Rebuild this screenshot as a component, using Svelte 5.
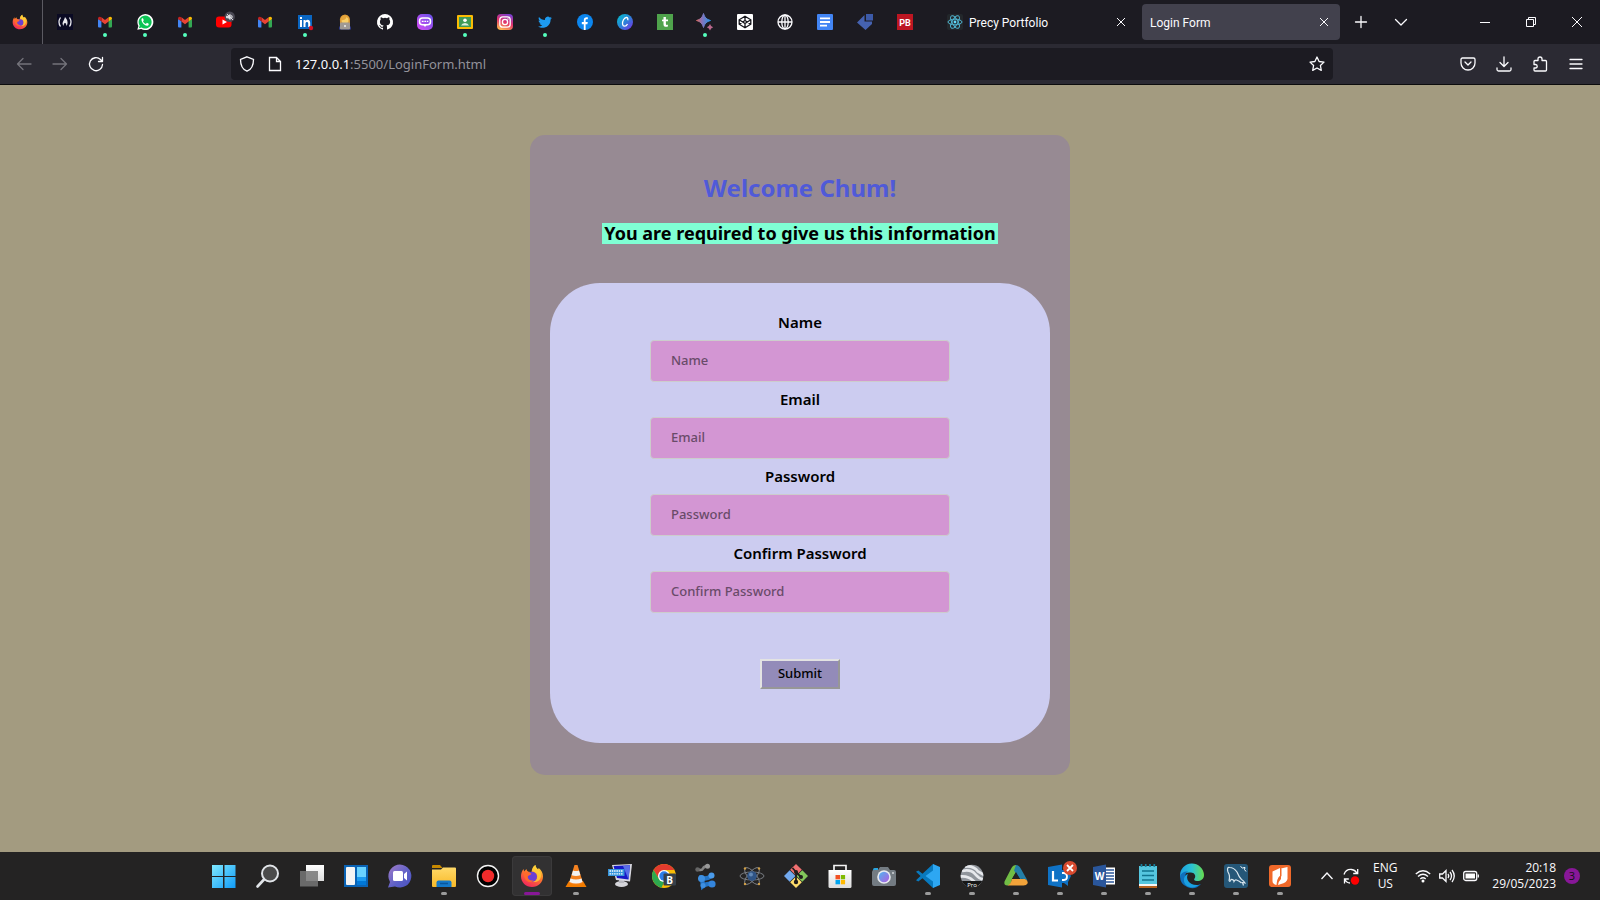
<script>
  const gmail =
    '<path d="M1 5v7.500q0 1 1 1h2.400V7z" fill="#4285f4"/><path d="M15 5v7.500q0 1-1 1h-2.400V7z" fill="#34a853"/><path d="M4.400 3.300 8 6l3.600-2.700V7.500L8 10.200 4.400 7.500z" fill="#ea4335"/><path d="M1 4.500q0-1.700 1.700-1.700 1 0 1.700.6v4.100L1 5z" fill="#c5221f"/><path d="M15 4.500q0-1.700-1.700-1.700-1 0-1.700.6v4.100L15 5z" fill="#fbbc04"/>';
  const firefox =
    '<path d="M12 23C5.800 23 1 18.400 1 12.300 1 9.500 2 6.800 3.600 5l.5 2.500L6.500 5c.2 1.400.8 2.300 2 2.700l3 .3C12 4.500 13.200 2.200 15.500 1c.1 2.200 1 3.300 2.500 4.500l.7-1.500c2.700 2 4.300 5 4.300 8.500C23 18.500 18.100 23 12 23z" fill="url(#fox)"/><path d="M15.500 1c-2.600 1.400-3.500 3.700-3.300 6.300 2.300.3 5 2 5 5.200 0 3-2 5-4.700 5.300 4.500 1.200 8.500-1.600 8.500-6.300 0-2.300-1-4.300-2.500-5.700C17 4.500 15.600 3.200 15.500 1z" fill="#ffd53a" opacity=".75"/><circle cx="12" cy="12.700" r="5" fill="#6b3fd4"/><path d="M3.500 8.800c3-1.500 5.400-.8 8 .9-1 1.700-3.300 1.300-3.800 3 0 2.800 3 4.500 6 3.500-3 3.800-9.700 2-10.200-7.400z" fill="#ff6a2b"/>';

  const pinned = [
    { name: 'freeCodeCamp', art: '<path fill="#0a0a23" d="M0 0h16v16H0z"/><g fill="none" stroke="#e8e8ee" stroke-width="1.300"><path d="M3.500 3.500q-3 4.500 0 9M12.500 3.500q3 4.500 0 9"/></g><path d="M8 3c2.500 2.500 3 5 2.300 7.500L9 12c.7-2-.2-3-1-3s-1.700 1-1 3l-1.300-1.500C5 8 7.500 6 8 3z" fill="#e8e8ee"/>' },
    { name: 'Gmail', dot: true, art: gmail },
    { name: 'WhatsApp', dot: true, art: '<path d="M.3 15.800 1.400 12A8 8 0 1 1 4.200 14.900z" fill="#fff"/><path d="m1.900 14.200.8-2.600a6.500 6.500 0 1 1 1.900 1.900z" fill="#0bc454"/><path d="M5 4.200c-2 2 2 7.700 5.200 7.500 1.700-.2 1.600-1.500 1.500-2L9.900 8.800l-1 1.100C7.600 9.400 6.600 8.500 6 7.200l.8-1L6 4.300z" fill="#fff"/>' },
    { name: 'Gmail', dot: true, art: gmail },
    { name: 'YouTube', art: '<rect x="-1" y="2.500" width="15.500" height="11" rx="3" fill="#f00"/><path d="m5.500 5.500 4.500 2.500-4.500 2.500z" fill="#fff"/><circle cx="12.700" cy="2.800" r="5.200" fill="#4a4954"/><path d="M9.500 2.200h1.700l2-1.700v5l-2-1.700H9.500zM14.500 1.200q1.500 1.700 0 3.500M10 0l6 6" stroke="#e5e5ea" fill="#e5e5ea" stroke-width=".900"/>' },
    { name: 'Gmail', art: gmail },
    { name: 'LinkedIn', dot: true, art: '<path fill="#0a66c2" d="M1 1h14v14H1z"/><path fill="#fff" d="M3 6h2v7H3zM3 3h2v2H3zM6.500 6h2v1c1.600-2 4.700-1.400 4.700 1.800V13h-2V9.500c0-2.300-2.700-2-2.700 0V13h-2z"/><circle cx="14" cy="14" r="2.200" fill="#d11124"/>' },
    { name: 'Technologist', art: '<path d="M3 8Q2 1 8 .5 14 1 13 9v2H3z" fill="#dc9a35"/><circle cx="8" cy="6" r="3.600" fill="#f8cf68"/><path d="M4 6.500Q9 6 9.500 3q2 1 2.500 4 .5-5.500-4-5.500T4 6.500z" fill="#e5a53c"/><path d="M2 15.500Q1.700 10 8 10t6 5.500z" fill="#303f94"/><rect x="3" y="8.500" width="10" height="7" rx="1" fill="#a09a94"/><circle cx="8" cy="12" r="1" fill="#eee"/>' },
    { name: 'GitHub', art: '<path fill="#fff" d="M8 0a8 8 0 0 0-2.530 15.590c.4.070.55-.170.55-.380v-1.490c-2.230.480-2.700-.940-2.700-.940-.360-.930-.890-1.180-.890-1.180-.730-.5.060-.490.060-.490.800.060 1.230.830 1.230.830.710 1.230 1.870.870 2.330.660.070-.520.280-.870.510-1.070-1.780-.2-3.640-.890-3.640-3.950 0-.870.310-1.590.820-2.150-.080-.2-.360-1.020.080-2.120 0 0 .670-.210 2.200.820a7.700 7.700 0 0 1 4 0c1.530-1.040 2.200-.820 2.200-.820.440 1.100.160 1.920.080 2.120.510.560.820 1.270.820 2.150 0 3.070-1.870 3.750-3.650 3.950.290.250.540.730.540 1.480v2.200c0 .210.150.460.550.380A8 8 0 0 0 8 0z"/>' },
    { name: 'Chat', art: '<rect width="16" height="16" rx="5" fill="url(#chat)"/><rect x="2.500" y="4" width="11" height="6.800" rx="3" fill="none" stroke="#fff" stroke-width="1.500"/><path d="M6 10.500h4L8 13zM4.800 6.700h1.800v1.300H4.800zM7.400 6.700H9v1.300H7.400zM9.800 6.700h1.500v1.300H9.800z" fill="#fff"/>' },
    { name: 'Classroom', dot: true, art: '<rect y="1" width="16" height="14" rx="1" fill="#fbbc04"/><path fill="#3f9b57" d="M2 3h12v10H2z"/><circle cx="8" cy="6.300" r="1.800" fill="#fff"/><path d="M4 11.500Q5 9 8 9t4 2.500z" fill="#d8f0dd"/>' },
    { name: 'Instagram', art: '<rect width="16" height="16" rx="4" fill="url(#insta)"/><rect x="2.800" y="2.800" width="10.400" height="10.400" rx="3" fill="none" stroke="#fff" stroke-width="1.300"/><circle cx="8" cy="8" r="2.600" fill="none" stroke="#fff" stroke-width="1.300"/><circle cx="11" cy="5" r=".7" fill="#fff"/>' },
    { name: 'Twitter', dot: true, art: '<path fill="#1d9bf0" d="M15 3.900c-.5.200-1 .4-1.600.4.600-.3 1-.9 1.200-1.500-.5.300-1.100.5-1.800.7A2.900 2.900 0 0 0 7.900 6C5.500 6 3.400 4.800 2 3c-.8 1.400-.3 3 .9 3.800-.5 0-.9-.1-1.300-.4 0 1.400 1 2.600 2.300 2.900-.4.100-.8.100-1.300 0 .4 1.200 1.400 2 2.700 2A5.800 5.800 0 0 1 1 12.500c4.500 2.900 12.600.9 12.600-7z"/>' },
    { name: 'Facebook', art: '<circle cx="8" cy="8" r="8" fill="#0c86ee"/><path fill="#fff" d="M6.800 16v-5.700h-2V8h2V6.200c0-2.200 1.300-3.300 4-2.900v2h-1c-1 0-1.200.5-1.200 1.200V8h2.200l-.4 2.300H8.600V16z"/>' },
    { name: 'Canva', art: '<circle cx="8" cy="8" r="8" fill="url(#canva)"/><path d="M10.700 6.200c1-3.500-2.500-3.500-4.200-.5-1.800 3.200-1.100 6.500 1 6.500 1.500 0 2.500-1.200 3-2.200" fill="none" stroke="#fff" stroke-width="1.300"/>' },
    { name: 'Translate', art: '<path fill="#4fa34c" d="M0 0h16v16H0z"/><path fill="#fff" d="M6.500 3h2.400v2.500H11v1.800H8.900v2.500c0 1.300.7 1.300 2 1v1.700c-2.500.8-4.400.2-4.400-2.200v-3H5V5.700l1.500-.3z"/>' },
    { name: 'Bard', dot: true, art: '<path d="M6.500-.5Q7.800 5.200 13.500 6.500 7.800 7.800 6.500 13.500 5.200 7.800-.5 6.500 5.200 5.200 6.500-.5z" fill="url(#bard)" stroke="url(#bard)" stroke-width="1" stroke-linejoin="round"/><path d="M13 10q.7 2.500 3.200 3.200-2.500.7-3.200 3.200-.7-2.500-3.200-3.200Q12.300 12.500 13 10z" fill="#b9678c"/>' },
    { name: 'CodePen', art: '<rect width="16" height="16" rx="1" fill="#fff"/><path d="m8 2.200 5.800 3.600v4.400L8 13.800 2.200 10.200V5.800zM2.200 5.800 8 9.500l5.800-3.700M2.200 10.200 8 6.500l5.800 3.700M8 2.200v4.300M8 9.500v4.300" fill="none" stroke="#15151b" stroke-width="1.300"/>' },
    { name: 'Globe', art: '<g fill="none" stroke="#fbfbfe" stroke-width="1.300"><circle cx="8" cy="8" r="7"/><ellipse cx="8" cy="8" rx="3.200" ry="7"/><path d="M1 8h14M8 1v14"/></g>' },
    { name: 'Docs', art: '<rect width="16" height="16" rx="1" fill="#4285f4"/><path d="M3 3.500h10v1.800H3zM3 7.100h10v1.800H3zM3 10.700h7v1.800H3z" fill="#fff"/>' },
    { name: 'Blocks', art: '<path fill="#4562b0" d="M0 8.500 7.500 1v6.500H15V10l-6.500 6z"/><path fill="#3c5aa8" d="M9 0h7v6.500H9z"/>' },
    { name: 'PB', art: '<path fill="#bd1622" d="M0 0h16v16H0z"/><text x="8" y="11.500" font-size="9" font-weight="700" text-anchor="middle" fill="#fff" font-family="Roboto, sans-serif">PB</text>' }
  ];

  const react =
    '<rect width="16" height="16" rx="2" fill="#23272b"/><g fill="none" stroke="#4fb3ce" stroke-width="1"><ellipse cx="8" cy="8" rx="7" ry="2.800"/><ellipse cx="8" cy="8" rx="7" ry="2.800" transform="rotate(60 8 8)"/><ellipse cx="8" cy="8" rx="7" ry="2.800" transform="rotate(120 8 8)"/></g><circle cx="8" cy="8" r="1.400" fill="#61dafb"/>';

  const apps = [
    { name: 'Start', art: '<path fill="url(#win)" d="M0 1h11v11H0zM12.500 1h11v11h-11zM0 13h11v11H0zM12.500 13h11v11h-11z"/>' },
    { name: 'Search', art: '<circle cx="14" cy="9.500" r="8" fill="#4b4b4b" stroke="#e1e4e8" stroke-width="2"/><path d="m8 15.500-6.500 7" stroke="#e1e4e8" stroke-width="2.600" stroke-linecap="round"/>' },
    { name: 'Task view', art: '<path fill="url(#pane)" d="M6 1h18v16H6z"/><path fill="#777" opacity=".85" d="M0 7h18v15.500H0z"/>' },
    { name: 'Widgets', art: '<path fill="#0a63b5" d="M0 1h24v22H0z"/><rect x="2" y="3" width="9" height="18" rx="1" fill="#f4f4f4"/><path fill="#69d2ff" d="M13 3h9v10h-9z"/><path fill="#1b9af0" d="M13 13h9v4h-9z"/><path fill="#0078d8" d="M13 17h9v4h-9z"/>' },
    { name: 'Chat', art: '<path d="M0 23.500 2 18A11.500 11.500 0 1 1 7 22.500z" fill="url(#teams)"/><rect x="5" y="7" width="10" height="10" rx="1.500" fill="#fff"/><path d="m16 10 3-2.500v9L16 14z" fill="#fff"/>' },
    { name: 'File Explorer', open: true, art: '<path d="M0 2q0-1 1-1h7l2.500 3H0z" fill="#c88900"/><path d="M0 5.500h9L11 3.500h12q1 0 1 1V22q0 1-1 1H1q-1 0-1-1z" fill="url(#folder)"/><path d="M4.500 23v-4.500q0-2 2-2h11q2 0 2 2V23z" fill="#1478c8"/><path d="M8 19.500h8" stroke="#0a569b" stroke-width="1.500"/>' },
    { name: 'Recorder', art: '<circle cx="12" cy="12" r="10.500" fill="#000" stroke="#f3f3f3" stroke-width="1.400"/><circle cx="12" cy="12" r="6.200" fill="#ef2b2b"/>' },
    { name: 'Firefox', active: true, art: firefox },
    { name: 'VLC', open: true, art: '<path d="M5 17h14l3.500 6H1.500z" fill="#f27c00"/><path d="M10.500 1h3L19 19q-7 3-14 0z" fill="#f58220"/><path d="m9 6.500-1.400 4.700q4.400 1.400 8.800 0L15 6.500q-3 1-6 0zM6.400 14.500 5.500 18q6.500 3 13 0l-.9-3.500q-5.600 2-11.200 0z" fill="#f2f2f2"/>' },
    { name: 'On-Screen Keyboard', art: '<ellipse cx="13.500" cy="20" rx="6.500" ry="3" fill="#d5d5da"/><path d="M11 15h5v4h-5z" fill="#b9b9c0"/><path d="M4 1 24 0 22 17.500 8 16z" fill="#d8d8e0"/><path d="M5.500 2 22 1.300 20.500 15.500 9 14z" fill="#1719c7"/><path d="M15 2l7-.7-1.500 14.200z" fill="#586de8"/><path d="M0 5h16.500v7H0z" fill="#3695db"/><path d="M1.500 7h13.500M1.500 9.800h13.500" stroke="#fff" stroke-width="1.300" stroke-dasharray="1.500 .800"/>' },
    { name: 'Chrome', art: '<circle cx="12" cy="12" r="12" fill="#fbbc05"/><path d="M1.600 6A12 12 0 0 1 22.400 6H12l-5 9z" fill="#e33b2e"/><path d="M1.600 6 7 15l5 3-2.500 5.700A12 12 0 0 1 1.600 6z" fill="#2da94f"/><circle cx="12" cy="12" r="6" fill="#fff"/><circle cx="12" cy="12" r="4.700" fill="#2b7de9"/><rect x="11.500" y="9.500" width="12.500" height="12" rx="1" fill="#36404a"/><text x="17.700" y="19.500" font-size="10" font-weight="700" text-anchor="middle" fill="#fff" font-family="Open Sans, sans-serif">B</text>' },
    { name: 'Flow', art: '<path d="M2 5.500q4 1.500 5-1t5-2.500" stroke="#858585" stroke-width="2.500" fill="none"/><circle cx="1.500" cy="5.500" r="2.200" fill="#666"/><circle cx="11.500" cy="2.300" r="2.500" fill="#999"/><path d="M15.500 11.500q-4 4-9.500 2.500l1 8q4-3 9-2" stroke="#2475c7" stroke-width="4.500" fill="none"/><circle cx="15.500" cy="11.500" r="3" fill="#4b9bea"/><circle cx="5.500" cy="14.500" r="3.500" fill="#3e90e2"/><circle cx="7" cy="21.500" r="2.500" fill="#3e90e2"/><circle cx="16" cy="20" r="3.600" fill="#3485dc"/>' },
    { name: 'Atom', art: '<g fill="none" stroke="#80848b" stroke-width=".9"><ellipse cx="12" cy="12" rx="12" ry="4"/><ellipse cx="12" cy="12" rx="10.500" ry="4" transform="rotate(50 12 12)"/><ellipse cx="12" cy="12" rx="10.500" ry="4" transform="rotate(130 12 12)"/></g><circle cx="12" cy="12" r="4.800" fill="#2f5486"/><circle cx="11" cy="10.500" r="2" fill="#6288b5"/><g fill="#d2a047"><circle cx="5" cy="4.500" r="1.200"/><circle cx="19" cy="4.500" r="1.200"/><circle cx="5" cy="20" r="1.200"/><circle cx="19" cy="20" r="1.200"/></g>' },
    { name: 'Git', art: '<path d="m12 0 5.800 5.800L12 11.500 6.200 5.800z" fill="#f06f70"/><path d="m18.300 6.200 5.700 5.800-5.700 5.800L12.500 12z" fill="#82c75b"/><path d="m12 12.500 5.800 5.700L12 24l-5.800-5.800z" fill="#ffdd6c"/><path d="m5.700 6.200 5.800 5.800-5.800 5.800L0 12z" fill="#72a9ee"/><path d="m8.500 4 3.500 4v10M12 8l5 5" stroke="#211d1d" stroke-width="1.800" fill="none"/><g fill="#211d1d"><circle cx="12" cy="8" r="2"/><circle cx="12" cy="18" r="2.200"/><circle cx="17" cy="13" r="2"/></g>' },
    { name: 'Microsoft Store', art: '<path d="M6 7V1.500h12V7" fill="none" stroke="#f3f3f3" stroke-width="1.700"/><path fill="url(#pane)" d="M.5 6h23v16.500q0 1.500-1.500 1.500H2q-1.500 0-1.500-1.500z"/><path fill="#f25022" d="M7.500 11H12v4.300H7.500z"/><path fill="#7fba00" d="M12.800 11h4.300v4.300h-4.300z"/><path fill="#00a4ef" d="M7.500 16H12v4.300H7.500z"/><path fill="#ffb900" d="M12.800 16h4.300v4.300h-4.300z"/>' },
    { name: 'Camera', art: '<path d="M1 6q0-2 1.500-2H6v3H1z" fill="#2ba5df"/><path d="M8 3h8l2 3h4q2 0 2 2v12q0 2-2 2H2q-2 0-2-2V8q0-2 2-2h4z" fill="#737b82"/><circle cx="12" cy="13" r="6.800" fill="#e8ebf0"/><circle cx="12" cy="13" r="5.200" fill="url(#lens)"/><circle cx="21" cy="9" r="1" fill="#d0d4d8"/>' },
    { name: 'VS Code', open: true, art: '<path d="M17 0 6.500 9.700 2.300 6.500 0 7.800 4.500 12 0 16.200l2.300 1.300 4.200-3.200L17 24l1-1V1z" fill="#0879be"/><path d="M17 0 24 3v18l-7 3v-6.500L9.500 12 17 6.500z" fill="#2da7f2"/>' },
    { name: 'Earth Pro', open: true, art: '<clipPath id="earth"><circle cx="12" cy="12" r="11.300"/></clipPath><g clip-path="url(#earth)"><path d="M0 0h24v24H0z" fill="#8f949b"/><path d="M2 7q9-2 13 3t10 6M5 2.500q9-1 13 5l7 4M0 12.500q8-1 13 4t9 5" stroke="#e6e8ec" stroke-width="2.800" fill="none"/><path d="M0 17h24v7H0z" fill="#161616"/></g><text x="12" y="22.500" font-size="6" text-anchor="middle" fill="#fff" font-family="Open Sans, sans-serif">Pro</text>' },
    { name: 'Triangle', open: true, art: '<path d="M12 1Q9 1 7.500 4L.5 17.500Q-.5 21.500 3.500 21.500 7 21 8 15l4-7z" fill="#71bd45"/><path d="M12 1q3 0 5 4l6.500 11.500q-4-2.500-7.500-1.500L10 6.500z" fill="#237fa8"/><path d="M3.500 21.500Q7 20 8 15h13q3.500 1.500 2.500 4.500-1 2-4 2z" fill="#f2a33a"/><path d="m12 8 4 7H8z" fill="#242323"/>' },
    { name: 'Lync', open: true, badge: true, art: '<path d="M13 6h7l3 6-3 6v4l-4-3h-3z" fill="#0f72c5"/><path d="M13 9h3q3 0 3 3.500T16 16h-3" fill="none" stroke="#fff" stroke-width="1.800"/><path d="m0 3 14-2.500v23L0 21z" fill="#0f72c5"/><path d="M5 7v9.500h5" fill="none" stroke="#fff" stroke-width="2.200"/>' },
    { name: 'Word', open: true, art: '<path fill="#fff" d="M12 3.500h11v17H12z"/><path d="M14 6h8M14 9h8M14 12h8M14 15h8M14 18h8" stroke="#2b579a" stroke-width="1.300"/><path d="m1 3 13-2.500v23L1 21z" fill="#2a569b"/><text x="7.500" y="16" font-size="10" font-weight="700" text-anchor="middle" fill="#fff" font-family="Open Sans, sans-serif">W</text>' },
    { name: 'Notepad', open: true, art: '<path d="M3 2h18v19H3z" fill="#55c6df"/><path d="M3 20h18v2H3z" fill="#f5f5f5"/><path d="M3 22h18v2H3z" fill="#b5611f"/><path d="M5.500 0v3M9.700 0v3M14 0v3M18.300 0v3" stroke="#177f9b" stroke-width="1.700"/><path d="M6 7h12M6 11.500h12M6 16h12" stroke="#10748f" stroke-width="1.500"/>' },
    { name: 'Edge', open: true, art: '<path d="M0 12A12 12 0 0 1 24 11c0 4-3 6-7 6-2.500 0-3.500-1-2.500-2.500 2-3-.5-6-3.500-6C6 8.500 1.500 10 0 14z" fill="url(#edge)"/><path d="M0 12c1-3 4.500-5 8-4.500C5 9 4.500 13 6.500 16.500c2.500 4.500 8 6 14.500 3.500A12 12 0 0 1 0 12z" fill="#0f70bd"/><path d="M8 10c-3 5 1.500 12 10.500 11C13 26 3 23 4 15q.5-4 4-5z" fill="#1aa0e0"/>' },
    { name: 'MySQL Workbench', open: true, art: '<rect width="24" height="24" rx="3" fill="#255778"/><path d="M5 17Q6.500 12 4 8 2.500 3 5.500 3.500 10 3.500 13 8q2 5 4.500 7.500 2 1 3.500 3.500l-2.500-.5 1 3M5 17q1.500 1 2-1.500 2.500-.5 3 2 1-2 2.500-1.500 3 1 5 3" fill="none" stroke="#d9e6ee" stroke-width="1.200"/><path d="m16.500 2.500 2 1.500 2.500-.5-.5 2 1.500 2" fill="none" stroke="#fff"/>' },
    { name: 'Nitro', open: true, art: '<rect x="1" y="1" width="22" height="22" rx="3" fill="#f0692a"/><path d="M4.500 7.500 12 4v8q-3 2-3.500 9-4-1-4-4z" fill="#fff"/><path d="M13 4.500 19.500 3v12q-1 4-6.500 5-3 1-3 1 0-3 3-6z" fill="#fff"/><path d="M12 4.500h1.500V12q-3 3-4.500 9 0-6 3-9z" fill="#f0692a"/>' }
  ];

  const fields = [
    { id: 'name', label: 'Name', type: 'text' },
    { id: 'email', label: 'Email', type: 'email' },
    { id: 'password', label: 'Password', type: 'password' },
    { id: 'confirm', label: 'Confirm Password', type: 'password' }
  ];
</script>

{#snippet line(name, path)}
  <button class="tool" aria-label={name}>
    <svg viewBox="0 0 16 16" width="16" height="16" fill="none" stroke="currentColor" stroke-width="1.3" stroke-linecap="round" stroke-linejoin="round"><path d={path} /></svg>
  </button>
{/snippet}

<svg class="defs" width="0" height="0" aria-hidden="true">
  <defs>
    <linearGradient id="fox" x1=".8" y1="0" x2=".3" y2="1"><stop offset="0" stop-color="#ffe53b" /><stop offset=".45" stop-color="#ff7b2a" /><stop offset="1" stop-color="#f0245e" /></linearGradient>
    <linearGradient id="chat" x1="1" y1="0" x2="0" y2="1"><stop offset="0" stop-color="#6453e8" /><stop offset="1" stop-color="#d94bf5" /></linearGradient>
    <linearGradient id="insta" x1=".7" y1="0" x2=".3" y2="1"><stop offset="0" stop-color="#7b3fd0" /><stop offset=".5" stop-color="#e1306c" /><stop offset="1" stop-color="#fdb54e" /></linearGradient>
    <linearGradient id="canva" x1="0" y1="0" x2="1" y2="1"><stop offset="0" stop-color="#00c4cc" /><stop offset=".5" stop-color="#2a83d8" /><stop offset="1" stop-color="#7d2ae8" /></linearGradient>
    <linearGradient id="bard" x1="0" y1=".5" x2="1" y2=".5"><stop offset="0" stop-color="#d5695f" /><stop offset=".4" stop-color="#8474bd" /><stop offset="1" stop-color="#2a95e8" /></linearGradient>
    <linearGradient id="win" x1="0" y1="0" x2="1" y2="1"><stop offset="0" stop-color="#7fe9ff" /><stop offset="1" stop-color="#109bf7" /></linearGradient>
    <linearGradient id="pane" x1="0" y1="0" x2="0" y2="1"><stop offset="0" stop-color="#fff" /><stop offset="1" stop-color="#dcdcdc" /></linearGradient>
    <linearGradient id="teams" x1="0" y1="0" x2="1" y2="1"><stop offset="0" stop-color="#a27dc8" /><stop offset=".6" stop-color="#5b5fc7" /><stop offset="1" stop-color="#4a52c0" /></linearGradient>
    <linearGradient id="folder" x1="0" y1="0" x2="0" y2="1"><stop offset="0" stop-color="#ffd968" /><stop offset="1" stop-color="#f8b928" /></linearGradient>
    <linearGradient id="lens" x1="0" y1="0" x2="1" y2="1"><stop offset="0" stop-color="#4fb4f0" /><stop offset="1" stop-color="#b25de0" /></linearGradient>
    <linearGradient id="edge" x1="0" y1="0" x2="1" y2="0"><stop offset="0" stop-color="#1b9de2" /><stop offset=".5" stop-color="#2bc3d2" /><stop offset="1" stop-color="#67dc4d" /></linearGradient>
  </defs>
</svg>

<div class="screen">
  <header class="tabs">
    <button class="view" aria-label="Firefox View"><svg viewBox="0 0 24 24" width="16" height="16">{@html firefox}</svg></button>
    <nav class="pinned" aria-label="Pinned tabs">
      {#each pinned as tab}
        <button class="pin" class:dot={tab.dot} aria-label={tab.name}><svg viewBox="0 0 16 16" width="16" height="16">{@html tab.art}</svg></button>
      {/each}
    </nav>
    <div class="tab">
      <svg viewBox="0 0 16 16" width="16" height="16">{@html react}</svg>
      <span>Precy Portfolio</span>
      <button class="close" aria-label="Close Precy Portfolio"><svg viewBox="0 0 10 10" width="10" height="10"><path d="m1 1 8 8M9 1 1 9" /></svg></button>
    </div>
    <div class="tab current">
      <span>Login Form</span>
      <button class="close" aria-label="Close Login Form"><svg viewBox="0 0 10 10" width="10" height="10"><path d="m1 1 8 8M9 1 1 9" /></svg></button>
    </div>
    <div class="extra">
      {@render line('New tab', 'M8 2.500v11M2.500 8h11')}
      {@render line('List all tabs', 'm2.500 5.500 5.500 5.500 5.500-5.500')}
    </div>
    <div class="window">
      <button aria-label="Minimize"><svg viewBox="0 0 12 12" width="12" height="12"><path d="M1 6.500h10" /></svg></button>
      <button aria-label="Restore"><svg viewBox="0 0 12 12" width="12" height="12"><path d="M1.500 3.500h7v7h-7zM3.500 3.500v-2h7v7h-2" /></svg></button>
      <button aria-label="Close window"><svg viewBox="0 0 12 12" width="12" height="12"><path d="m1 1 10 10M11 1 1 11" /></svg></button>
    </div>
  </header>

  <div class="toolbar">
    <div class="history">
      <span class="dim">{@render line('Back', 'M15 8H1.500M7 2.500 1.500 8 7 13.500')}</span>
      <span class="dim">{@render line('Forward', 'M1 8h13.500M9 2.500 14.500 8 9 13.500')}</span>
      {@render line('Reload', 'M14.500 8.500A6.500 6.500 0 1 1 12.500 3.500L14.500 5.500V1.500M14.500 5.500H10.500')}
    </div>
    <div class="address">
      <svg viewBox="0 0 16 16" width="16" height="16"><path d="M8 .8 14.500 3.500C14.500 9.500 12.500 13.500 8 15.200 3.500 13.500 1.500 9.500 1.500 3.500z" /></svg>
      <svg viewBox="0 0 16 16" width="16" height="16"><path d="M2.500 1.500h7l4 4v9h-11zM9.500 1.500v4h4" /></svg>
      <span class="url">127.0.0.1<i>:5500/LoginForm.html</i></span>
      {@render line('Bookmark this page', 'm8 1 2.100 4.500 4.900.600-3.600 3.400.900 4.900L8 12l-4.300 2.400.900-4.900L1 6.100l4.900-.600z')}
    </div>
    <div class="actions">
      {@render line('Save to Pocket', 'M2.500 2h11q1.500 0 1.500 1.500V7A7 7 0 0 1 1 7V3.500Q1 2 2.500 2zM5 6l3 3 3-3')}
      {@render line('Downloads', 'M8 .800v9.500M4 6.500l4 4 4-4M1 12v1.500q0 1.500 1.500 1.500h11q1.500 0 1.500-1.500V12')}
      {@render line('Extensions', 'M2 5.500q0-1 1-1h3V3q0-2 2-2t2 2v1.500h3.500q1 0 1 1V14q0 1-1 1H3q-1 0-1-1v-2h1.500q1.700 0 1.700-1.700T3.500 8.500H2z')}
      {@render line('Open menu', 'M2 3.500h12M2 8h12M2 12.500h12')}
    </div>
  </div>

  <main>
    <section class="card">
      <h1>Welcome Chum!</h1>
      <h2><mark>You are required to give us this information</mark></h2>
      <form onsubmit={(e) => e.preventDefault()}>
        {#each fields as field}
          <label for={field.id}>{field.label}</label>
          <input id={field.id} type={field.type} placeholder={field.label} />
        {/each}
        <button class="submit" type="submit">Submit</button>
      </form>
    </section>
  </main>

  <footer class="taskbar">
    <nav class="apps" aria-label="Taskbar">
      {#each apps as app}
        <button class="app" class:open={app.open} class:active={app.active} aria-label={app.name}>
          <svg viewBox="0 0 24 24" width="24" height="24">{@html app.art}</svg>
          {#if app.badge}<svg class="badge" viewBox="0 0 14 14" width="14" height="14"><circle cx="7" cy="7" r="7" fill="#d84a2f" /><path d="m4 4 6 6M10 4l-6 6" stroke="#fff" stroke-width="1.800" /></svg>{/if}
        </button>
      {/each}
    </nav>
    <div class="tray">
      <svg viewBox="0 0 16 16" width="16" height="16"><path d="m2.500 11 5.500-6 5.500 6" /></svg>
      <svg viewBox="0 0 16 16" width="16" height="16"><path d="M1 6.500Q3 1 8.500 1.500 12.500 2 14 5.500M14.700 1v4.500h-4.500M1.500 15.500V11h4.300M1.500 11q2 4 5.500 4" /><circle cx="12" cy="12.500" r="4.200" fill="#f00" stroke="none" /></svg>
      <div class="lang"><span>ENG</span><span>US</span></div>
      <div class="status">
        <svg viewBox="0 0 16 16" width="16" height="16"><path d="M.8 6Q8-.5 15.200 6M3 8.500Q8 4 13 8.500M5.300 11Q8 8.700 10.700 11" stroke-width="1.400" /><circle cx="8" cy="13" r="1.500" fill="#fff" stroke="none" /></svg>
        <svg viewBox="0 0 16 16" width="16" height="16"><path d="M.7 6h2.800L7 2.500v11L3.500 10H.7zM9 6q1.500 2 0 4M11 4q3 4 0 8M13 2q4.500 6 0 12" /></svg>
        <svg viewBox="0 0 16 16" width="16" height="16"><rect x=".7" y="3.500" width="13" height="9" rx="2" /><path d="M15.300 6.500v3" /><path d="M2.500 5.500h9.500v5H2.500z" fill="#fff" stroke="none" /></svg>
      </div>
      <div class="clock"><time>20:18</time><span>29/05/2023</span></div>
      <span class="count">3</span>
    </div>
  </footer>
</div>

<style>
  :global(body) { margin: 0; }
  .screen {
    display: flex;
    flex-direction: column;
    min-height: 100vh;
    background: #a39b80;
    color: #fbfbfe;
    font-family: "Open Sans", "Noto Sans", sans-serif;
  }
  .defs { position: absolute; }
  .screen button { font: inherit; color: inherit; cursor: pointer; }
  svg { flex: none; display: block; overflow: visible; }

  .tabs { display: flex; align-items: center; height: 44px; background: #1c1b22; font-size: 12px; }
  .tabs button, .tool, .app { display: flex; align-items: center; justify-content: center; padding: 0; border: 0; background: none; }
  .tabs .view { width: 43px; height: 44px; padding-right: 2px; box-sizing: border-box; border-right: 1px solid #5b5a62; }
  .pinned { display: flex; padding-left: 2px; }
  .pinned .pin { position: relative; width: 40px; height: 44px; }
  .pin.dot::after { content: ""; position: absolute; top: 33px; left: 18px; width: 4px; height: 4px; border-radius: 2px; background: #54ffbd; }
  .tab { display: flex; align-items: center; gap: 6px; flex: 0 1 198px; height: 36px; padding: 0 8px; margin-left: 14px; box-sizing: border-box; border-radius: 4px; white-space: nowrap; }
  .tab.current { margin-left: 5px; background: #42414d; }
  .tab span { flex: 1; line-height: 16px; padding-top: 2px; font-family: "Roboto", sans-serif; }
  .tabs .close { width: 16px; height: 16px; }
  .close svg, .window svg { fill: none; stroke: #fbfbfe; stroke-width: 1; }
  .extra { display: flex; gap: 24px; margin-left: 13px; }
  .window { display: flex; margin-left: auto; }
  .window button { width: 46px; height: 44px; }

  .toolbar { display: flex; align-items: center; height: 40px; background: #2b2a33; border-bottom: 1px solid #0c0c0d; }
  .tool { width: 16px; height: 16px; }
  .history { display: flex; gap: 20px; padding-left: 16px; }
  .dim { color: #74737b; }
  .address { display: flex; align-items: center; flex: 1; gap: 12px; height: 32px; margin-left: 127px; padding: 0 8px; box-sizing: border-box; border-radius: 4px; background: #1c1b22; }
  .address > svg, .tray svg { fill: none; stroke: #fbfbfe; stroke-width: 1.3; }
  .url { flex: 1; font-family: "Noto Sans", sans-serif; font-size: 13px; }
  .url i { font-style: normal; color: #93929a; }
  .actions { display: flex; gap: 20px; padding: 0 16px 0 127px; }

  main { flex: 1; padding: 50px 20px; color: #000; font-family: "Noto Sans", "Open Sans", sans-serif; }
  .card { max-width: 540px; margin: 0 auto; padding: 37px 20px 32px; box-sizing: border-box; border-radius: 15px; background: #978a93; text-align: center; }
  h1 { margin: 0; font-size: 24px; line-height: 32px; color: #505ad8; }
  h2 { display: flex; justify-content: center; margin: 19px 0 39px; font-size: 18px; line-height: 21px; }
  mark { padding: 0 2px; background: #7fffd4; color: #000; }
  form { display: flex; flex-direction: column; align-items: center; padding: 24px 20px 54px; border-radius: 50px; background: #ccccf0; }
  label { padding-bottom: 2px; font-size: 15px; font-weight: 600; line-height: 31px; }
  input { width: 100%; max-width: 300px; height: 42px; margin-bottom: 2px; padding: 0 20px 2px; box-sizing: border-box; border: 1px solid #ccc; border-radius: 4px; background: #d396d3; color: #000; font: 500 13px "Noto Sans", sans-serif; }
  input::placeholder { color: #694b69; opacity: 1; }
  .screen .submit { width: 80px; height: 30px; margin-top: 44px; padding: 0 0 2px; border: 2px solid; border-color: #e3e3e3 #979797 #979797 #e3e3e3; background: #938bb9; color: #000; font-size: 13px; font-weight: 500; }

  .taskbar { display: flex; align-items: center; height: 48px; background: #242323; font-size: 12px; }
  .apps { display: flex; gap: 4px; margin-left: auto; }
  .app { position: relative; width: 40px; height: 40px; border-radius: 4px; }
  .app.active { background: #323132; box-shadow: inset 0 0 0 1px #3b3a3b; }
  .app.open::after, .app.active::after { content: ""; position: absolute; bottom: 1px; left: 17px; width: 6px; height: 3px; border-radius: 2px; background: #9b9b9b; }
  .app.active::after { left: 12px; width: 16px; background: #881798; }
  .badge { position: absolute; right: 3px; top: 5px; }
  .tray { display: flex; align-items: center; padding: 0 20px 0 19px; }
  .tray > svg + svg { margin-left: 8px; }
  .lang { display: flex; flex-direction: column; width: 28px; margin-left: 12px; text-align: center; line-height: 16px; }
  .status { display: flex; gap: 8px; margin-left: 16px; }
  .clock { display: flex; flex-direction: column; min-width: 62px; margin-left: 13px; text-align: right; line-height: 16px; }
  .count { width: 16px; height: 16px; margin-left: 8px; border-radius: 8px; background: #881798; color: #111; font-size: 11px; line-height: 16px; text-align: center; }
</style>
